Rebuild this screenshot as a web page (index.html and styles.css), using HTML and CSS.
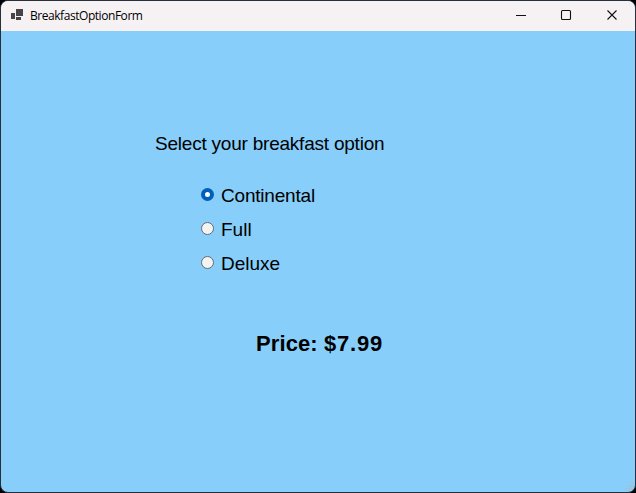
FILE: index.html
```html
<!DOCTYPE html>
<html lang="en">
<head>
<meta charset="utf-8">
<title>BreakfastOptionForm</title>
<link rel="stylesheet" href="styles.css">
</head>
<body>
<div class="window">
  <header class="titlebar">
    <svg class="app-icon" width="14" height="14" viewBox="0 0 14 14" fill="#464446"><path d="M0 4h4v6H0zM5 0h7v7H5zM5 8h5v3H5z"/></svg>
    <span class="title">BreakfastOptionForm</span>
    <div class="controls">
      <svg width="46" height="30" viewBox="0 0 46 30"><path d="M18 14.5h10"/></svg>
      <svg width="46" height="30" viewBox="0 0 46 30"><rect x="17.5" y="9.5" width="9" height="9" rx="1"/></svg>
      <svg width="46" height="30" viewBox="0 0 46 30"><path d="M17.5 9.5l9 9M26.5 9.5l-9 9"/></svg>
    </div>
  </header>
  <main class="form">
    <p class="prompt">Select your breakfast option</p>
    <div class="options">
      <label class="option"><span class="radio checked"></span><span class="label tight">Continental</span></label>
      <label class="option"><span class="radio"></span><span class="label">Full</span></label>
      <label class="option"><span class="radio"></span><span class="label">Deluxe</span></label>
    </div>
    <p class="price">Price: <span class="amount">$7.99</span></p>
  </main>
  <svg class="grip" width="9" height="9" viewBox="0 0 9 9" fill="#a5bfce"><path d="M6 0h2v2H6zM3 3h2v2H3zM6 3h2v2H6zM0 6h2v2H0zM3 6h2v2H3zM6 6h2v2H6z"/></svg>
</div>
</body>
</html>
```
FILE: styles.css
```css
* { box-sizing: border-box; }
body { margin: 0; background: #000; overflow: hidden; color: #000; font-family: "Liberation Sans", Arial, sans-serif; }
.window { position: relative; width: 636px; height: 493px; border: 1px solid #27303a; border-radius: 8px; overflow: hidden; background: #87cefa; }
.titlebar { height: 30px; display: flex; align-items: center; background: #f6f2f4; padding-left: 10px; }
.app-icon { flex: none; margin-right: 5px; }
.title { font: 12px "Open Sans", sans-serif; letter-spacing: -0.45px; padding-bottom: 2px; }
.controls { display: flex; margin-left: auto; margin-right: -1px; }
.controls svg { fill: none; stroke: #111; stroke-width: 1.1; }
.form { padding: 101px 0 0 154px; }
p { margin: 0; }
.prompt { font-size: 19px; line-height: 24px; letter-spacing: -0.22px; }
.options { padding: 23px 0 0 46px; }
.option { display: flex; align-items: center; height: 34px; }
.radio { width: 13px; height: 13px; border: 1px solid #626b72; border-radius: 50%; background: #f3f3f3; margin: 0 7px 4px 0; }
.checked { border: 4px solid #005fb8; background: #fff; }
.label { font-size: 19px; line-height: 24px; }
.tight { letter-spacing: -0.2px; }
.price { padding: 50px 0 0 101px; font-size: 22px; line-height: 26px; font-weight: bold; letter-spacing: 0.1px; }
.amount { letter-spacing: 0.8px; }
.grip { position: absolute; right: 1px; bottom: 1px; }
```
